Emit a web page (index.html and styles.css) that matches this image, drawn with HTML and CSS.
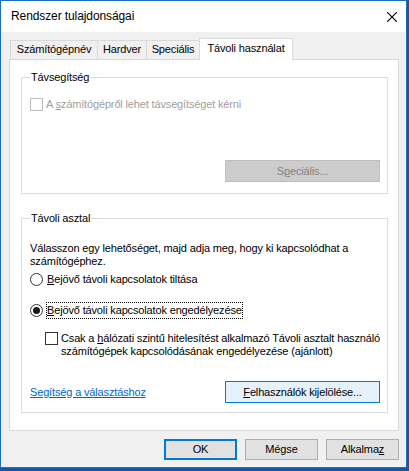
FILE: index.html
```html
<!DOCTYPE html>
<html lang="hu">
<head>
<meta charset="utf-8">
<title>Rendszer tulajdonságai</title>
<link rel="stylesheet" href="styles.css">
</head>
<body>
<div class="window">
  <div class="titlebar">
    <span class="title">Rendszer tulajdonságai</span>
    <svg class="close" width="10" height="10" viewBox="0 0 10 10"><path d="M0 0 L10 10 M10 0 L0 10" stroke="#000" stroke-width="1.1" fill="none"/></svg>
  </div>
  <div class="client">
    <div class="tabs">
      <div class="tab t1">Számítógépnév</div>
      <div class="tab t2">Hardver</div>
      <div class="tab t3">Speciális</div>
      <div class="tab active t4">Távoli használat</div>
    </div>
    <div class="panel">
      <fieldset class="group g1">
        <legend>Távsegítség</legend>
        <div class="check disabled"><span class="box"></span><span>A <u>s</u>zámítógépről lehet távsegítséget kérni</span></div>
        <div class="btnrow first"><button class="btn wide disabled">S<u>p</u>eciális...</button></div>
      </fieldset>
      <fieldset class="group g2">
        <legend>Távoli asztal</legend>
        <p class="desc">Válasszon egy lehetőséget, majd adja meg, hogy ki kapcsolódhat a<br>számítógéphez.</p>
        <div class="radio r1"><span class="dot"></span><span><u>B</u>ejövő távoli kapcsolatok tiltása</span></div>
        <div class="radio r2 checked"><span class="dot"></span><span class="focus"><u>B</u>ejövő távoli kapcsolatok engedélyezése</span></div>
        <div class="check nla"><span class="box"></span><span class="lines">Csak a <u>h</u>álózati szintű hitelesítést alkalmazó Távoli asztalt használó<br>számítógépek kapcsolódásának engedélyezése (ajánlott)</span></div>
        <div class="btnrow last"><a class="link" href="#">Segítség a választáshoz</a><button class="btn wide hot"><u>F</u>elhasználók kijelölése...</button></div>
      </fieldset>
    </div>
    <div class="footer">
      <button class="btn dlg default">OK</button>
      <button class="btn dlg">Mégse</button>
      <button class="btn dlg">Alkalma<u>z</u></button>
    </div>
  </div>
</div>
</body>
</html>
```
FILE: styles.css
```css
html, body {
  margin: 0;
  padding: 0;
}
body {
  background: #0f5aa8;
  width: 409px;
  height: 471px;
  overflow: hidden;
  font-family: "Liberation Sans", Arial, sans-serif;
  font-size: 11px;
  line-height: 13px;
  letter-spacing: -0.15px;
  color: #000;
}
.window {
  width: 407px;
  box-sizing: border-box;
  border: 1px solid #1b6dc1;
  background: #f0f0f0;
}
.titlebar {
  height: 31px;
  background: #fff;
  display: flex;
  align-items: center;
  justify-content: space-between;
  padding: 0 9px 0 10px;
}
.title {
  font-size: 12px;
  line-height: 15px;
  letter-spacing: -0.1px;
  color: #000;
}
.close {
  display: block;
}
.client {
  padding: 6px 0 7px 0;
}
.tabs {
  display: flex;
  align-items: flex-end;
  height: 21px;
  margin-left: 9px;
  position: relative;
  z-index: 1;
}
.tab {
  box-sizing: border-box;
  height: 19px;
  border: 1px solid #d9d9d9;
  border-bottom: none;
  background: #f0f0f0;
  text-align: center;
  padding-top: 2px;
  white-space: nowrap;
}
.tab + .tab {
  margin-left: -1px;
}
.t1 { width: 88px; }
.t2 { width: 50px; }
.t3 { width: 54px; }
.t4 { width: 94px; }
.tab.active {
  height: 22px;
  margin-bottom: -1px;
  background: #fff;
  padding-top: 3px;
}
.panel {
  margin-left: 8px;
  width: 390px;
  box-sizing: border-box;
  background: #fff;
  border: 1px solid #d9d9d9;
  padding: 11px 10px 17px 11px;
}
.group {
  margin: 0;
  border: 1px solid #dcdcdc;
  min-width: 0;
}
.group legend {
  padding: 0 1px;
  line-height: 13px;
}
.g1 {
  padding: 14px 7px 11px 8px;
}
.g2 {
  margin-top: 18px;
  padding: 17px 7px 9px 8px;
}
.check {
  display: flex;
  align-items: flex-start;
  gap: 3px;
}
.box {
  width: 13px;
  height: 13px;
  box-sizing: border-box;
  border: 1px solid #333;
  background: #fff;
  flex: none;
}
.check.disabled {
  color: #a0a0a0;
}
.check.disabled .box {
  border-color: #bcbcbc;
}
.btnrow {
  display: flex;
  justify-content: flex-end;
  align-items: center;
}
.btnrow.first {
  margin-top: 49px;
}
.btnrow.last {
  margin-top: 23px;
  justify-content: space-between;
}
.btn {
  font-family: "Liberation Sans", Arial, sans-serif;
  font-size: 11px;
  line-height: 13px;
  letter-spacing: -0.15px;
  color: #000;
  background: #e1e1e1;
  border: 1px solid #adadad;
  padding: 0;
  margin: 0;
  box-sizing: border-box;
  height: 22px;
}
.btn.wide {
  width: 155px;
}
.btn.disabled {
  background: #cccccc;
  border-color: #bfbfbf;
  color: #838383;
}
.btn.hot {
  background: #e5f1fb;
  border-color: #0078d7;
}
.desc {
  margin: 0;
  white-space: nowrap;
}
.radio {
  display: flex;
  align-items: center;
  gap: 4px;
  height: 13px;
}
.r1 {
  margin-top: 5px;
}
.r2 {
  margin-top: 18px;
}
.dot {
  width: 13px;
  height: 13px;
  box-sizing: border-box;
  border: 1px solid #333;
  border-radius: 50%;
  background: #fff;
  flex: none;
  display: flex;
  align-items: center;
  justify-content: center;
}
.radio.checked .dot::after {
  content: "";
  width: 7px;
  height: 7px;
  border-radius: 50%;
  background: #1a1a1a;
}
.focus {
  display: inline-block;
  border: 1px dotted #000;
  padding: 1px 0;
  margin: -2px 0 -2px -1px;
  line-height: 13px;
}
.nla {
  margin-top: 15px;
  margin-left: 15px;
}
.lines {
  white-space: nowrap;
}
.link {
  color: #0066cc;
  text-decoration: underline;
}
.footer {
  display: flex;
  justify-content: flex-end;
  gap: 8px;
  margin-top: 8px;
  padding-right: 7px;
}
.btn.dlg {
  width: 73px;
  height: 21px;
}
.btn.default {
  border: 2px solid #0078d7;
}
```
